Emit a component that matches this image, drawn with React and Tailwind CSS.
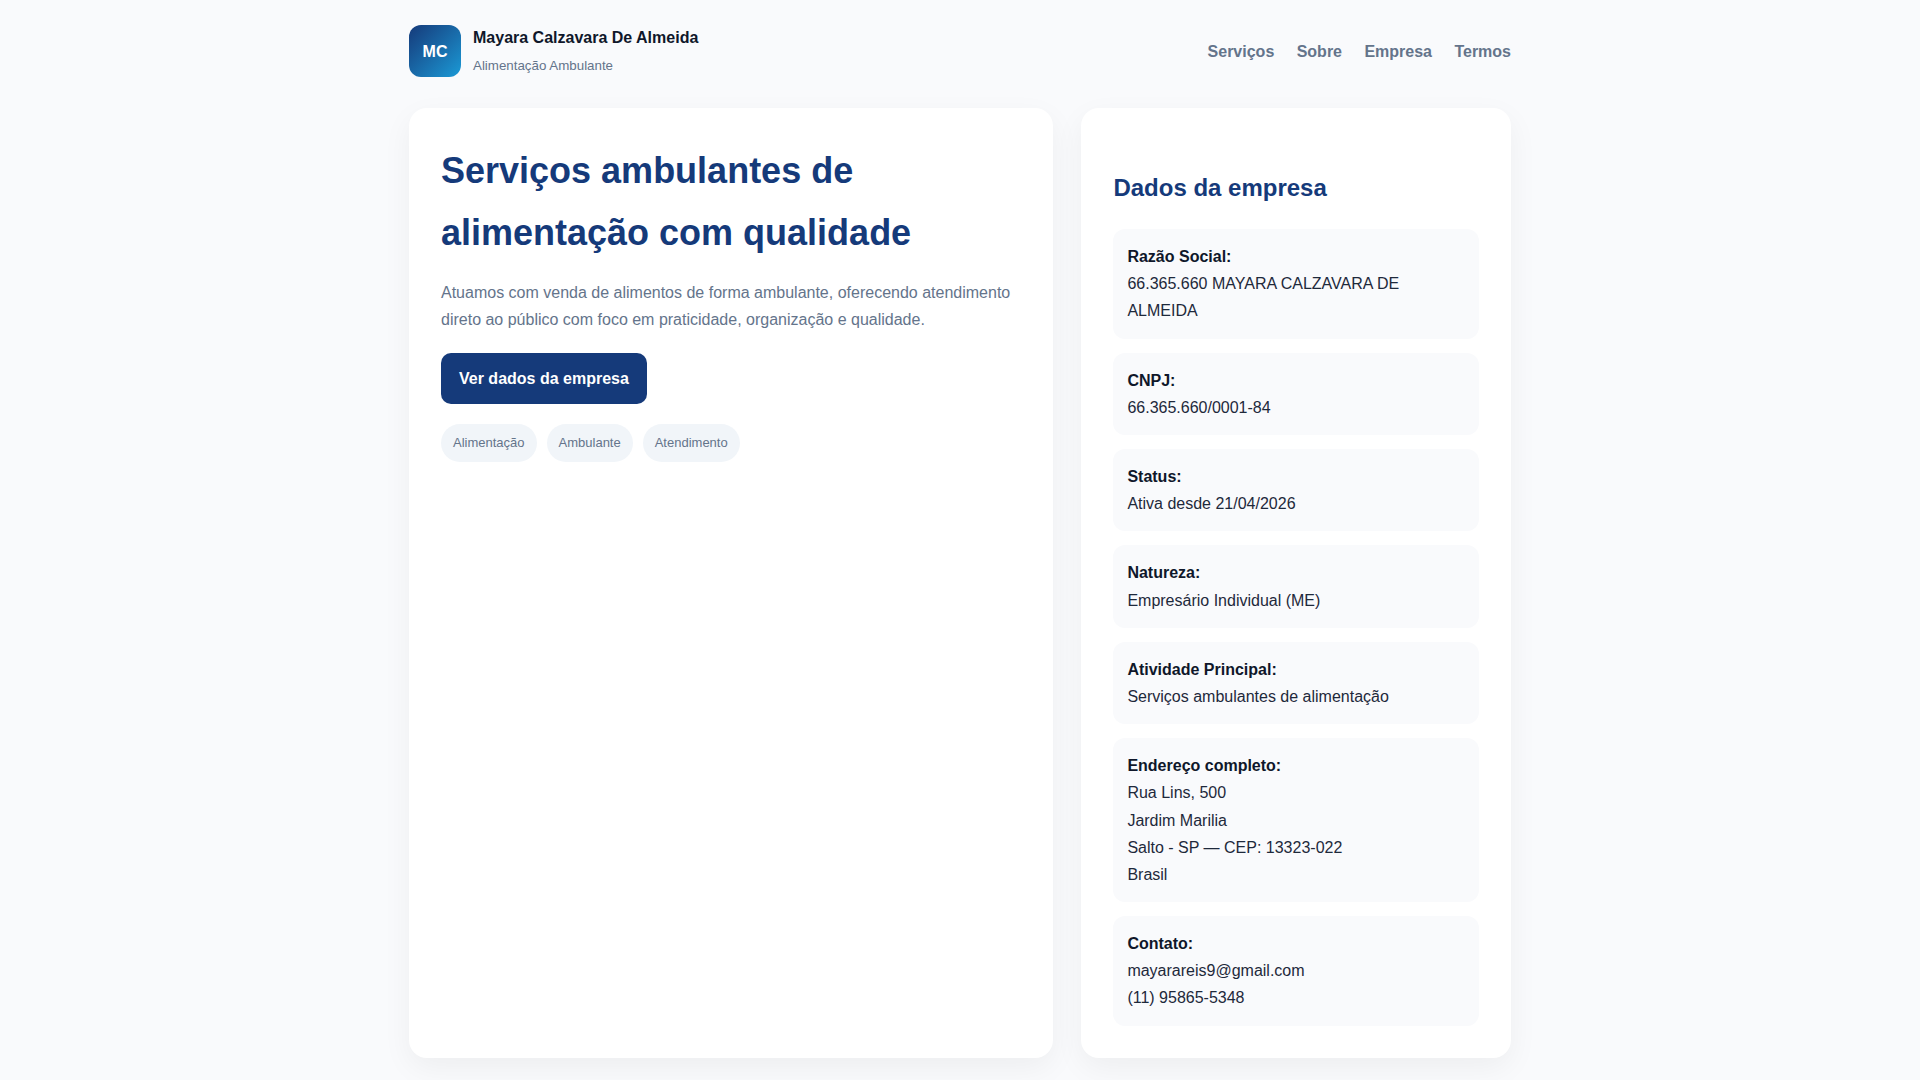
import React from 'react';

const companyData = [
  { label: 'Razão Social:', lines: ['66.365.660 MAYARA CALZAVARA DE ALMEIDA'] },
  { label: 'CNPJ:', lines: ['66.365.660/0001-84'] },
  { label: 'Status:', lines: ['Ativa desde 21/04/2026'] },
  { label: 'Natureza:', lines: ['Empresário Individual (ME)'] },
  { label: 'Atividade Principal:', lines: ['Serviços ambulantes de alimentação'] },
  { label: 'Endereço completo:', lines: ['Rua Lins, 500', 'Jardim Marilia', 'Salto - SP — CEP: 13323-022', 'Brasil'] },
  { label: 'Contato:', lines: ['mayarareis9@gmail.com', '(11) 95865-5348'] }
];

const navLinks = ['Serviços', 'Sobre', 'Empresa', 'Termos'];
const tags = ['Alimentação', 'Ambulante', 'Atendimento'];

const App = () => {
  return (
    <div className="min-h-screen bg-[#f9fafc] font-['Liberation_Sans',Arial,sans-serif] text-base leading-[1.7] text-[#1e293b]">
      <div className="mx-auto max-w-[1150px] px-6">
        {/* Header */}
        <header className="mb-[5.2px] flex h-[102.8px] items-center justify-between">
          <div className="flex items-center gap-3">
            <div className="flex h-[52px] w-[52px] items-center justify-center rounded-xl bg-gradient-to-br from-[#153a7a] to-[#1a9ad6] font-bold text-white">
              MC
            </div>
            <div className="pb-[0.6px]">
              <div className="font-bold text-[#0f172a]">Mayara Calzavara De Almeida</div>
              <div className="mt-[3.4px] text-[13.33px] text-[#64748b]">Alimentação Ambulante</div>
            </div>
          </div>
          <nav className="flex gap-[22.4px]">
            {navLinks.map((link) => (
              <a key={link} href="#" className="font-bold text-[#64748b]">
                {link}
              </a>
            ))}
          </nav>
        </header>

        <main className="grid grid-cols-[1.5fr_1fr] gap-7">
          {/* Hero */}
          <section className="rounded-[18px] bg-white p-8 shadow-[0_10px_30px_rgba(0,0,0,0.05)]">
            <h1 className="text-4xl leading-[62.4px] font-bold text-[#153a7a]">
              Serviços ambulantes de alimentação com qualidade
            </h1>
            <p className="mt-3.5 text-[#64748b]">
              Atuamos com venda de alimentos de forma ambulante, oferecendo atendimento direto ao público com foco em praticidade, organização e qualidade.
            </p>
            <a href="#" className="mt-5 inline-block rounded-[10px] bg-[#153a7a] px-[18px] py-3 font-bold text-white">
              Ver dados da empresa
            </a>
            <div className="mt-5 flex gap-2.5">
              {tags.map((tag) => (
                <span key={tag} className="rounded-full bg-[#f1f5f9] px-3 py-2 text-[13px] text-[#64748b]">
                  {tag}
                </span>
              ))}
            </div>
          </section>

          {/* Company data */}
          <aside className="rounded-[18px] bg-white p-8 shadow-[0_10px_30px_rgba(0,0,0,0.05)]">
            <h2 className="mt-7 mb-[20.3px] text-2xl leading-[40.8px] font-bold text-[#153a7a]">Dados da empresa</h2>
            <div className="flex flex-col gap-3.5">
              {companyData.map((item) => (
                <div key={item.label} className="rounded-xl bg-[#f9fafc] p-3.5">
                  <strong className="block font-bold text-[#0f172a]">{item.label}</strong>
                  {item.lines.map((line) => (
                    <div key={line}>{line}</div>
                  ))}
                </div>
              ))}
            </div>
          </aside>
        </main>
      </div>
    </div>
  );
};

export default App;
